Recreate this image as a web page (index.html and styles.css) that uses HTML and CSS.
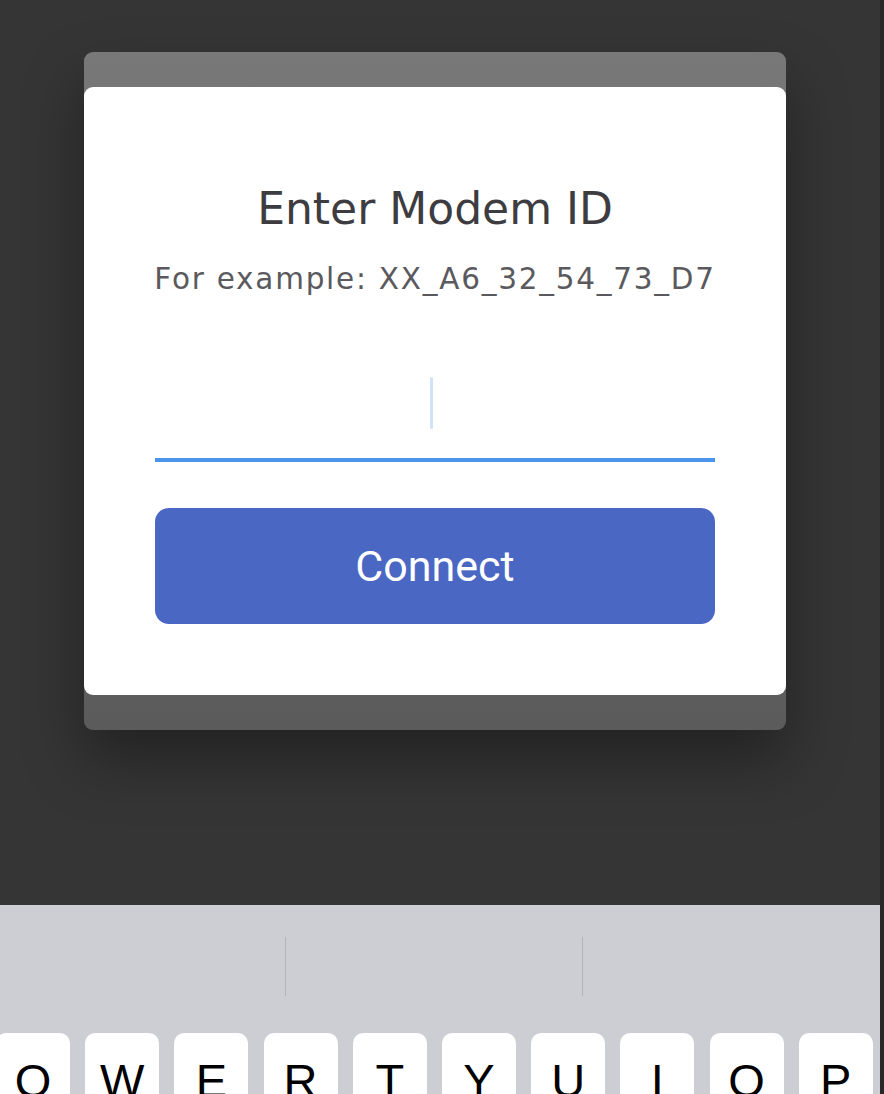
FILE: index.html
```html
<!DOCTYPE html>
<html lang="en">
<head>
<meta charset="utf-8">
<title>Enter Modem ID</title>
<link rel="stylesheet" href="styles.css">
</head>
<body>
<div class="screen">
  <div class="backdrop">
    <div class="frame">
      <div class="card">
        <h1 class="title">Enter Modem ID</h1>
        <p class="hint">For example: XX_A6_32_54_73_D7</p>
        <div class="field"><span class="caret"></span></div>
        <button class="connect" type="button">Connect</button>
      </div>
    </div>
  </div>
  <div class="keyboard">
    <div class="suggestions">
      <div class="sugg"></div>
      <div class="sugg sep"></div>
      <div class="sugg sep"></div>
    </div>
    <div class="keys">
      <div class="key">Q</div>
      <div class="key">W</div>
      <div class="key">E</div>
      <div class="key">R</div>
      <div class="key">T</div>
      <div class="key">Y</div>
      <div class="key">U</div>
      <div class="key">I</div>
      <div class="key">O</div>
      <div class="key">P</div>
    </div>
  </div>
</div>
</body>
</html>
```
FILE: styles.css
```css
* { box-sizing: border-box; }
html, body { margin: 0; padding: 0; }
body {
  background: #282828;
  width: 884px;
  height: 1094px;
  overflow: hidden;
}
.screen {
  width: 880px;
  height: 1094px;
  display: flex;
  flex-direction: column;
  overflow: hidden;
}
.backdrop {
  height: 905px;
  flex: none;
  background: #353535;
  padding: 52px 0 0 84px;
}
.frame {
  width: 702px;
  padding: 35px 0;
  border-radius: 9px;
  background: linear-gradient(#787878, #5b5b5b);
  box-shadow: 0 30px 60px rgba(0, 0, 0, 0.35);
}
.card {
  background: #ffffff;
  border-radius: 9px;
  padding: 96px 71px 71px;
  display: flex;
  flex-direction: column;
  align-items: center;
}
.title {
  margin: 0;
  font-family: "DejaVu Sans", sans-serif;
  font-weight: 400;
  font-size: 44px;
  line-height: 52px;
  color: #3c3c41;
  white-space: nowrap;
}
.hint {
  margin: 26px 0 0;
  font-family: "DejaVu Sans", sans-serif;
  font-size: 29.5px;
  line-height: 36px;
  letter-spacing: 1.75px;
  color: #5a5a5e;
  white-space: nowrap;
}
.field {
  width: 100%;
  padding: 80px 0 29px;
  border-bottom: 4px solid #4a94ea;
}
.caret {
  display: block;
  width: 3px;
  height: 52px;
  margin-left: 275px;
  border-radius: 2px;
  background: #cfe2f7;
}
.connect {
  margin-top: 46px;
  width: 100%;
  height: 116px;
  border: none;
  border-radius: 14px;
  background: #4a67c3;
  color: #ffffff;
  font-family: Roboto, sans-serif;
  font-size: 43px;
  font-weight: 400;
  padding: 0;
}
.keyboard {
  flex: 1;
  background: #cdced3;
  padding-top: 32px;
}
.suggestions {
  display: grid;
  grid-template-columns: 285px 297px 1fr;
  height: 59px;
}
.sep { border-left: 1px solid #b3b4b8; }
.keys {
  display: flex;
  gap: 15.2px;
  margin: 37px 0 0 -4px;
}
.key {
  flex: none;
  width: 74px;
  height: 90px;
  background: #ffffff;
  border-radius: 10px;
  text-align: center;
  padding-top: 24px;
  font-family: "Liberation Sans", Arial, sans-serif;
  font-size: 47px;
  line-height: 1;
  color: #000000;
}
```
